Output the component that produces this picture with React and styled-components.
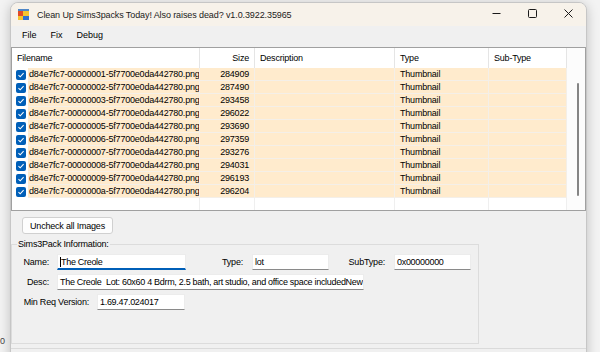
import styled, { createGlobalStyle } from "styled-components";

const GlobalStyle = createGlobalStyle`
  html, body { margin: 0; padding: 0; }
  body {
    background: #f3f3f3;
    font-family: "Liberation Sans", Arial, sans-serif;
    font-size: 9px;
    letter-spacing: -0.2px;
    color: #000;
    overflow: hidden;
  }
`;

const Desktop = styled.div`
  display: flex;
  width: 600px;
  height: 352px;
  overflow: hidden;
  background: #f3f3f3;
`;

const Gutter = styled.div`
  flex: none;
  width: 10px;
  box-sizing: border-box;
  padding-bottom: 6px;
  display: flex;
  flex-direction: column;
  justify-content: flex-end;
  font-size: 9px;
  color: #444;
`;

const Window = styled.div`
  flex: none;
  width: 577px;
  height: 362px;
  margin-top: 2px;
  box-sizing: border-box;
  border: 1px solid #c6c6c6;
  border-radius: 8px 8px 0 0;
  background: #f0f0f0;
  box-shadow: 0 2px 12px rgba(0, 0, 0, 0.22);
  display: flex;
  flex-direction: column;
  overflow: hidden;
`;

const TitleBar = styled.div`
  flex: none;
  height: 23px;
  display: flex;
  align-items: center;
  padding-left: 7px;
  background: #f7f2ea;
`;

const TitleText = styled.div`
  margin-left: 8px;
  letter-spacing: -0.1px;
  color: #1b1b1b;
  white-space: nowrap;
`;

const Controls = styled.div`
  margin-left: auto;
  align-self: flex-start;
  height: 20px;
  display: flex;
`;

const ControlButton = styled.div`
  width: 36px;
  height: 100%;
  display: flex;
  align-items: center;
  justify-content: center;
`;

const MenuBar = styled.div`
  flex: none;
  height: 18px;
  display: flex;
  align-items: center;
  padding-left: 4px;
  background: #f0f0f0;
`;

const MenuItem = styled.div`
  padding: 0 7px;
  letter-spacing: 0;
`;

const Content = styled.div`
  flex: 1;
  display: flex;
  flex-direction: column;
  padding-top: 3px;
`;

const ListView = styled.div`
  flex: none;
  height: 164px;
  box-sizing: border-box;
  border: 1px solid #a0a0a0;
  background: #fff;
  display: flex;
`;

const Table = styled.div`
  flex: 1;
  display: flex;
  flex-direction: column;
`;

const HeaderRow = styled.div`
  flex: none;
  height: 20px;
  display: grid;
  grid-template-columns: 188px 55px 140px 94px 78px;
`;

const HeaderCell = styled.div`
  display: flex;
  align-items: center;
  justify-content: ${(p) => (p.$right ? "flex-end" : "flex-start")};
  padding: 0 5px;
  border-right: 1px solid #e5e5e5;
  white-space: nowrap;
`;

const cols = "16px 172px 55px 140px 94px 78px";

const Row = styled.div`
  flex: none;
  height: 13px;
  display: grid;
  grid-template-columns: ${cols};
`;

const Cell = styled.div`
  box-sizing: border-box;
  display: flex;
  align-items: center;
  justify-content: ${(p) => (p.$right ? "flex-end" : "flex-start")};
  padding: ${(p) => p.$pad || "0 5px"};
  background: #ffebcd;
  border-right: 1px solid #f4efe8;
  border-bottom: 1px solid #f4efe8;
  white-space: nowrap;
  overflow: hidden;
`;

const CheckCell = styled.div`
  display: flex;
  align-items: center;
  padding-left: 4px;
  background: #fff;
`;

const Box = styled.div`
  width: 10px;
  height: 10px;
  border-radius: 2px;
  background: #005fb8;
  display: flex;
  align-items: center;
  justify-content: center;
`;

const Filler = styled.div`
  flex: 1;
  display: grid;
  grid-template-columns: ${cols};
`;

const FillerCell = styled.div`
  border-right: ${(p) => (p.$plain ? "none" : "1px solid #efefef")};
`;

const ScrollTrack = styled.div`
  flex: none;
  width: 18px;
  padding-top: 35px;
  box-sizing: border-box;
  background: #fcfcfc;
`;

const Thumb = styled.div`
  width: 2px;
  height: 113px;
  margin-left: 10px;
  border-radius: 1px;
  background: #858585;
`;

const Button = styled.div`
  align-self: flex-start;
  width: 91px;
  height: 17px;
  margin: 6px 0 0 11px;
  box-sizing: border-box;
  border: 1px solid #d0d0d0;
  border-radius: 3px;
  background: #fdfdfd;
  display: flex;
  align-items: center;
  justify-content: center;
  white-space: nowrap;
`;

const GroupBox = styled.div`
  position: relative;
  width: 468px;
  height: 100px;
  margin-top: 10px;
  box-sizing: border-box;
  border: 1px solid #dcdcdc;
  padding-top: 9px;
  display: flex;
  flex-direction: column;
  gap: 4px;
`;

const Legend = styled.div`
  position: absolute;
  top: -6px;
  left: 5px;
  padding: 0 1px;
  background: #f0f0f0;
  white-space: nowrap;
`;

const FieldRow = styled.div`
  height: 16px;
  display: flex;
  align-items: center;
`;

const Label = styled.div`
  width: ${(p) => p.$w}px;
  margin-right: ${(p) => p.$gap || 8}px;
  text-align: right;
  white-space: nowrap;
`;

const TextBox = styled.div`
  width: ${(p) => p.$w}px;
  height: 16px;
  box-sizing: border-box;
  padding: 0 2px;
  background: #fff;
  border: 1px solid #ececec;
  border-bottom: ${(p) => (p.$focused ? "2px solid #005fb8" : "1px solid #8a8a8a")};
  display: flex;
  align-items: center;
  letter-spacing: -0.3px;
  white-space: pre;
  overflow: hidden;
`;

const Caret = styled.span`
  width: 1px;
  height: 10px;
  background: #000;
`;

const StatusLine = styled.div`
  margin-top: 4px;
  border-top: 1px solid #dadada;
`;

const AppIcon = () => (
  <svg width="11" height="11" viewBox="0 0 11 11">
    <rect x="0" y="0" width="11" height="11" fill="#dfe6ef" />
    <rect x="0" y="2" width="5" height="5" fill="#e24b26" />
    <rect x="5" y="2" width="6" height="5" fill="#f4c430" />
    <rect x="0" y="7" width="5" height="4" fill="#f4c430" />
    <rect x="5" y="7" width="6" height="4" fill="#2f6fd0" />
    <rect x="0" y="0" width="11" height="2" fill="#4f86c6" />
  </svg>
);

const Check = () => (
  <svg width="8" height="8" viewBox="0 0 8 8">
    <path d="M1.5 4.2 L3.2 5.8 L6.6 2.2" fill="none" stroke="#fff" strokeWidth="1.1" />
  </svg>
);

const files = [
  ["1", "284909"],
  ["2", "287490"],
  ["3", "293458"],
  ["4", "296022"],
  ["5", "293690"],
  ["6", "297359"],
  ["7", "293276"],
  ["8", "294031"],
  ["9", "296193"],
  ["a", "296204"],
];

export default function App() {
  return (
    <>
      <GlobalStyle />
      <Desktop>
        <Gutter>0</Gutter>
        <Window>
          <TitleBar>
            <AppIcon />
            <TitleText>Clean Up Sims3packs Today! Also raises dead? v1.0.3922.35965</TitleText>
            <Controls>
              <ControlButton>
                <svg width="9" height="9" viewBox="0 0 9 9">
                  <path d="M0.5 4.5 H8.5" stroke="#1a1a1a" strokeWidth="1" />
                </svg>
              </ControlButton>
              <ControlButton>
                <svg width="9" height="9" viewBox="0 0 9 9">
                  <rect x="0.5" y="0.5" width="8" height="8" rx="1" fill="none" stroke="#1a1a1a" strokeWidth="1" />
                </svg>
              </ControlButton>
              <ControlButton>
                <svg width="9" height="9" viewBox="0 0 9 9">
                  <path d="M0.5 0.5 L8.5 8.5 M8.5 0.5 L0.5 8.5" stroke="#1a1a1a" strokeWidth="1" />
                </svg>
              </ControlButton>
            </Controls>
          </TitleBar>
          <MenuBar>
            <MenuItem>File</MenuItem>
            <MenuItem>Fix</MenuItem>
            <MenuItem>Debug</MenuItem>
          </MenuBar>
          <Content>
            <ListView>
              <Table>
                <HeaderRow>
                  <HeaderCell>Filename</HeaderCell>
                  <HeaderCell $right>Size</HeaderCell>
                  <HeaderCell>Description</HeaderCell>
                  <HeaderCell>Type</HeaderCell>
                  <HeaderCell>Sub-Type</HeaderCell>
                </HeaderRow>
                {files.map(([n, size]) => (
                  <Row key={n}>
                    <CheckCell>
                      <Box>
                        <Check />
                      </Box>
                    </CheckCell>
                    <Cell $pad="0 1px">{`d84e7fc7-0000000${n}-5f7700e0da442780.png`}</Cell>
                    <Cell $right>{size}</Cell>
                    <Cell />
                    <Cell>Thumbnail</Cell>
                    <Cell />
                  </Row>
                ))}
                <Filler>
                  <FillerCell $plain />
                  <FillerCell />
                  <FillerCell />
                  <FillerCell />
                  <FillerCell />
                  <FillerCell />
                </Filler>
              </Table>
              <ScrollTrack>
                <Thumb />
              </ScrollTrack>
            </ListView>
            <Button>Uncheck all Images</Button>
            <GroupBox>
              <Legend>Sims3Pack Information:</Legend>
              <FieldRow>
                <Label $w={37}>Name:</Label>
                <TextBox $w={129} $focused>
                  <Caret />
                  The Creole
                </TextBox>
                <Label $w={57} $gap={9}>Type:</Label>
                <TextBox $w={77}>lot</TextBox>
                <Label $w={56} $gap={9}>SubType:</Label>
                <TextBox $w={77}>0x00000000</TextBox>
              </FieldRow>
              <FieldRow>
                <Label $w={37}>Desc:</Label>
                <TextBox $w={307}>The Creole  Lot: 60x60 4 Bdrm, 2.5 bath, art studio, and office space includedNew</TextBox>
              </FieldRow>
              <FieldRow>
                <Label $w={77}>Min Req Version:</Label>
                <TextBox $w={88}>1.69.47.024017</TextBox>
              </FieldRow>
            </GroupBox>
            <StatusLine />
          </Content>
        </Window>
      </Desktop>
    </>
  );
}
